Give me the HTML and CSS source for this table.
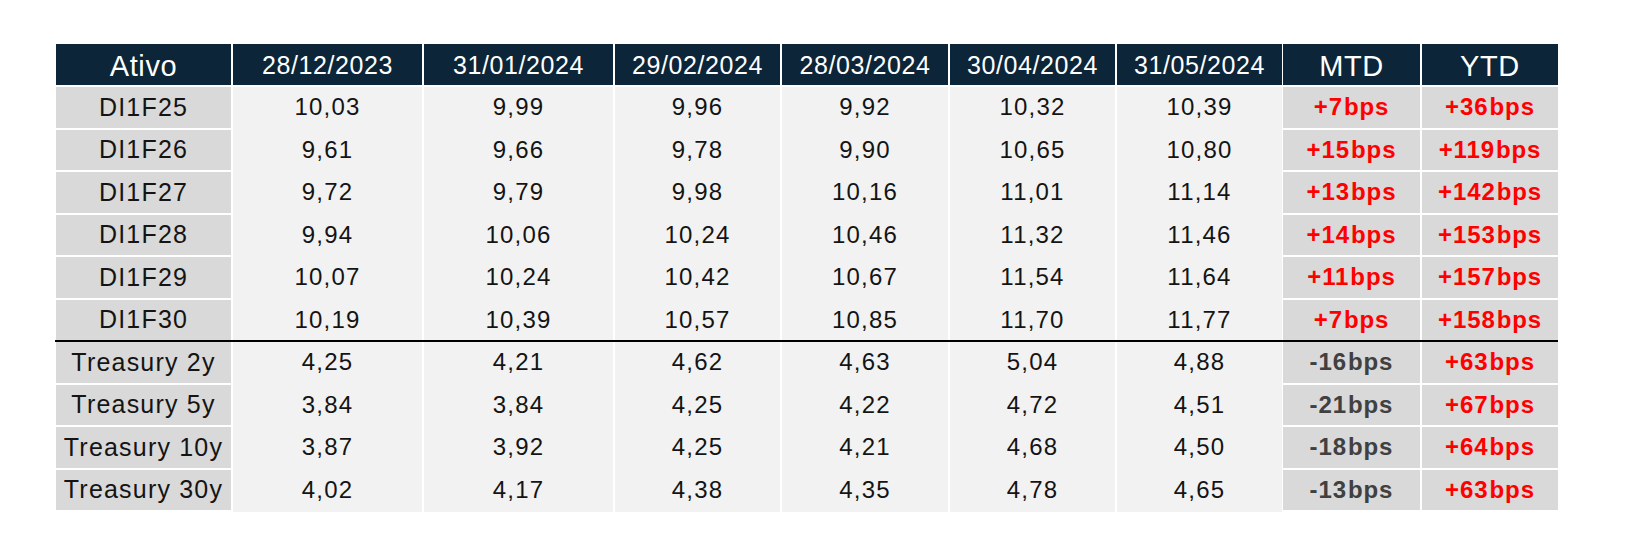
FILE: index.html
```html
<!DOCTYPE html>
<html lang="pt">
<head>
<meta charset="utf-8">
<title>Curvas de juros</title>
<link rel="stylesheet" href="styles.css">
</head>
<body>
<div class="page">
  <div class="table">
    <div class="row head">
      <div class="c c-a big">Ativo</div>
      <div class="c c-w">28/12/2023</div>
      <div class="c c-w">31/01/2024</div>
      <div class="c c-n">29/02/2024</div>
      <div class="c c-n2">28/03/2024</div>
      <div class="c c-n">30/04/2024</div>
      <div class="c c-n">31/05/2024</div>
      <div class="c c-m c-m1 big">MTD</div>
      <div class="c c-m big">YTD</div>
    </div>

    <div class="row">
      <div class="c c-a name">DI1F25</div>
      <div class="c c-w val">10,03</div><div class="c c-w val">9,99</div><div class="c c-n val">9,96</div><div class="c c-n2 val">9,92</div><div class="c c-n val">10,32</div><div class="c c-n val">10,39</div>
      <div class="c c-m c-m1 bps up">+7<span class="u">bps</span></div><div class="c c-m bps up">+36<span class="u">bps</span></div>
    </div>
    <div class="row">
      <div class="c c-a name">DI1F26</div>
      <div class="c c-w val">9,61</div><div class="c c-w val">9,66</div><div class="c c-n val">9,78</div><div class="c c-n2 val">9,90</div><div class="c c-n val">10,65</div><div class="c c-n val">10,80</div>
      <div class="c c-m c-m1 bps up">+15<span class="u">bps</span></div><div class="c c-m bps up">+119<span class="u">bps</span></div>
    </div>
    <div class="row">
      <div class="c c-a name">DI1F27</div>
      <div class="c c-w val">9,72</div><div class="c c-w val">9,79</div><div class="c c-n val">9,98</div><div class="c c-n2 val">10,16</div><div class="c c-n val">11,01</div><div class="c c-n val">11,14</div>
      <div class="c c-m c-m1 bps up">+13<span class="u">bps</span></div><div class="c c-m bps up">+142<span class="u">bps</span></div>
    </div>
    <div class="row">
      <div class="c c-a name">DI1F28</div>
      <div class="c c-w val">9,94</div><div class="c c-w val">10,06</div><div class="c c-n val">10,24</div><div class="c c-n2 val">10,46</div><div class="c c-n val">11,32</div><div class="c c-n val">11,46</div>
      <div class="c c-m c-m1 bps up">+14<span class="u">bps</span></div><div class="c c-m bps up">+153<span class="u">bps</span></div>
    </div>
    <div class="row">
      <div class="c c-a name">DI1F29</div>
      <div class="c c-w val">10,07</div><div class="c c-w val">10,24</div><div class="c c-n val">10,42</div><div class="c c-n2 val">10,67</div><div class="c c-n val">11,54</div><div class="c c-n val">11,64</div>
      <div class="c c-m c-m1 bps up">+11<span class="u">bps</span></div><div class="c c-m bps up">+157<span class="u">bps</span></div>
    </div>
    <div class="row">
      <div class="c c-a name">DI1F30</div>
      <div class="c c-w val">10,19</div><div class="c c-w val">10,39</div><div class="c c-n val">10,57</div><div class="c c-n2 val">10,85</div><div class="c c-n val">11,70</div><div class="c c-n val">11,77</div>
      <div class="c c-m c-m1 bps up">+7<span class="u">bps</span></div><div class="c c-m bps up">+158<span class="u">bps</span></div>
    </div>

    <div class="sep"></div>

    <div class="row">
      <div class="c c-a name">Treasury 2y</div>
      <div class="c c-w val">4,25</div><div class="c c-w val">4,21</div><div class="c c-n val">4,62</div><div class="c c-n2 val">4,63</div><div class="c c-n val">5,04</div><div class="c c-n val">4,88</div>
      <div class="c c-m c-m1 bps down">-16<span class="u">bps</span></div><div class="c c-m bps up">+63<span class="u">bps</span></div>
    </div>
    <div class="row">
      <div class="c c-a name">Treasury 5y</div>
      <div class="c c-w val">3,84</div><div class="c c-w val">3,84</div><div class="c c-n val">4,25</div><div class="c c-n2 val">4,22</div><div class="c c-n val">4,72</div><div class="c c-n val">4,51</div>
      <div class="c c-m c-m1 bps down">-21<span class="u">bps</span></div><div class="c c-m bps up">+67<span class="u">bps</span></div>
    </div>
    <div class="row">
      <div class="c c-a name">Treasury 10y</div>
      <div class="c c-w val">3,87</div><div class="c c-w val">3,92</div><div class="c c-n val">4,25</div><div class="c c-n2 val">4,21</div><div class="c c-n val">4,68</div><div class="c c-n val">4,50</div>
      <div class="c c-m c-m1 bps down">-18<span class="u">bps</span></div><div class="c c-m bps up">+64<span class="u">bps</span></div>
    </div>
    <div class="row">
      <div class="c c-a name">Treasury 30y</div>
      <div class="c c-w val">4,02</div><div class="c c-w val">4,17</div><div class="c c-n val">4,38</div><div class="c c-n2 val">4,35</div><div class="c c-n val">4,78</div><div class="c c-n val">4,65</div>
      <div class="c c-m c-m1 bps down">-13<span class="u">bps</span></div><div class="c c-m bps up">+63<span class="u">bps</span></div>
    </div>
  </div>
</div>
</body>
</html>
```

FILE: styles.css
```css
html, body {
  margin: 0;
  padding: 0;
  background: #ffffff;
}

body {
  font-family: "Liberation Sans", Arial, sans-serif;
  color: #111111;
}

.page {
  width: 1634px;
  height: 558px;
  padding: 44px 0 0 56px;
  box-sizing: border-box;
}

.table {
  display: flex;
  flex-direction: column;
  width: 1502px;
}

.row {
  display: flex;
  gap: 2px;
  height: 42.5px;
}

.row.head {
  height: 41px;
  margin-bottom: 2px;
}

.c {
  display: flex;
  align-items: center;
  justify-content: center;
  box-sizing: border-box;
  flex: none;
  white-space: nowrap;
}

.c-a { width: 175px; }
.c-w { width: 189px; }
.c-n { width: 165px; }
.c-n2 { width: 166px; }
.c-m { width: 136px; }
.c-m1 { width: 137px; margin-left: -1px; }

.head .c {
  background: #0c2539;
  color: #ffffff;
  font-size: 25px;
  letter-spacing: 0.6px;
  padding-top: 1px;
}

.head .big {
  font-size: 29px;
  letter-spacing: 0.6px;
  padding-top: 3px;
}

.name {
  background: #d9d9d9;
  border-bottom: 2px solid #ffffff;
  font-size: 25px;
  letter-spacing: 1.2px;
  color: #141414;
}

.val {
  background: #f2f2f2;
  font-size: 24px;
  letter-spacing: 1.2px;
  padding-bottom: 2px;
  color: #141414;
}

.bps {
  background: #d9d9d9;
  border-bottom: 2px solid #ffffff;
  font-size: 24px;
  font-weight: bold;
  letter-spacing: 0.9px;
}

.bps .u {
  margin-left: 1px;
}

.bps.up { color: #ff0000; }
.bps.down { color: #404040; }

.sep {
  height: 2px;
  margin-top: -2px;
  margin-left: -1px;
  width: 1503px;
  background: #000000;
  flex: none;
}
```
